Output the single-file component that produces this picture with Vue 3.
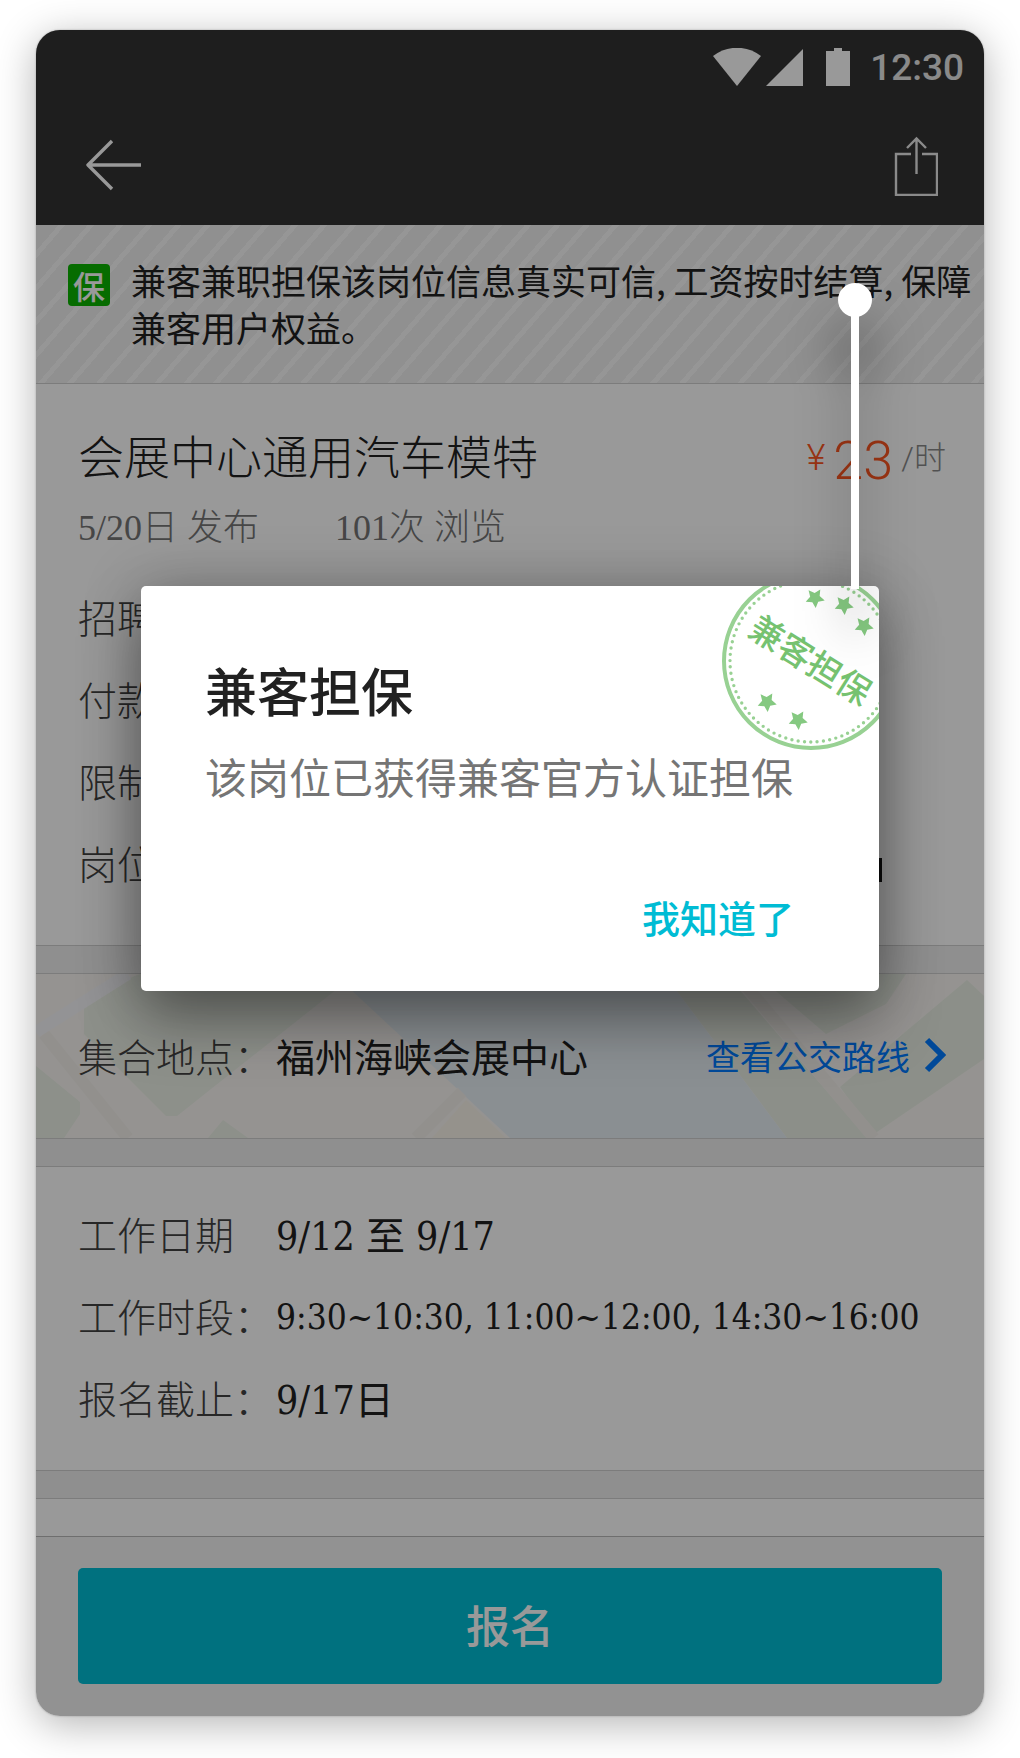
<script setup>
import { computed } from 'vue'

const jobLabels = ['招聘', '付款', '限制', '岗位']
const schedule = [
  { label: '工作日期', value: '9/12 至 9/17' },
  { label: '工作时段：', value: '9:30~10:30, 11:00~12:00, 14:30~16:00', long: true },
  { label: '报名截止：', value: '9/17日' },
]

// star centres in the stamp's 180 x 180 box
const stars = [[94, 27], [123, 34], [143, 55], [46, 131], [77, 149]]
const starPoints = computed(() => {
  const pts = []
  for (let i = 0; i < 10; i++) {
    const r = i % 2 ? 5 : 10
    const a = (Math.PI / 5) * i - Math.PI / 2
    pts.push(`${(r * Math.cos(a)).toFixed(2)},${(r * Math.sin(a)).toFixed(2)}`)
  }
  return pts.join(' ')
})
</script>

<template>
  <div class="page">
    <main class="phone">
      <header class="header">
        <div class="status">
          <svg class="wifi" width="48" height="38" viewBox="0 0 48 38"><path d="M0 8C14-3 34-3 48 8L24 38Z" fill="#fff" /></svg>
          <svg class="signal" width="38" height="38" viewBox="0 0 38 38"><path d="M37 1V38H0Z" fill="#fff" /></svg>
          <svg class="battery" width="24" height="38" viewBox="0 0 24 38"><path d="M0 3H8V0H16V3H24V38H0Z" fill="#fff" /></svg>
          <span class="time">12:30</span>
        </div>
        <nav class="toolbar">
          <button class="icon-btn" type="button" aria-label="返回">
            <svg width="56" height="52" viewBox="0 0 56 52" fill="none" stroke="#fff" stroke-width="3.4"><path d="M26 2 2 26 26 50M2 26H55" stroke-linejoin="round" /></svg>
          </button>
          <button class="icon-btn" type="button" aria-label="分享">
            <svg width="44" height="62" viewBox="0 0 44 62" fill="none" stroke="#e6e6e6" stroke-width="2.4"><path d="M17 20H2V61H43V20H28" /><path d="M22.500 40V5M13 14 22.500 4.500 32 14" /></svg>
          </button>
        </nav>
      </header>

      <section class="banner">
        <span class="badge">保</span>
        <p class="banner-text">兼客兼职担保该岗位信息真实可信, 工资按时结算, 保障兼客用户权益。</p>
      </section>

      <section class="card job">
        <div class="title-row">
          <h1 class="title">会展中心通用汽车模特</h1>
          <p class="price"><span class="yen">¥</span><span class="amount">23</span><span class="unit">/时</span></p>
        </div>
        <p class="meta"><span>5/20日 发布</span><span>101次 浏览</span></p>
        <ul class="rows">
          <li v-for="(label, i) in jobLabels" :key="label" class="row">
            <span class="label">{{ label }}</span>
            <span v-if="i === 3" class="cursor"></span>
          </li>
        </ul>
      </section>

      <section class="card place">
        <svg class="map" viewBox="0 0 948 164" preserveAspectRatio="none" aria-hidden="true">
          <rect width="948" height="164" fill="#f8f6f2" />
          <path d="M0 92 44 128V140L28 164H0ZM48 22 104 0H320L141 142H130L48 60ZM172 164 187 146 212 164Z" fill="#ebf0e6" />
          <path d="M628 0H690L831 164H751ZM720 0H870L850 30 790 60ZM804 113 931 6 948 22V85L838 160Z" fill="#eaefe4" />
          <path d="M298 0H628L751 164H474Z" fill="#e7eef4" />
          <path d="M396 164 430 126 470 164Z" fill="#f8f3ea" />
          <path d="M8 60 92 164M426 118 380 164M700 0 838 164" stroke="#f4f0ec" stroke-width="12" fill="none" />
          <path d="M0 58 92 0" stroke="#f6f5f8" stroke-width="12" fill="none" />
        </svg>
        <div class="row place-row">
          <span class="label">集合地点：</span>
          <span class="value">福州海峡会展中心</span>
          <a class="route" href="#">查看公交路线
            <svg width="22" height="36" viewBox="0 0 22 36" fill="none" stroke="#007aff" stroke-width="6"><path d="M3 3 18 18 3 33" /></svg>
          </a>
        </div>
      </section>

      <section class="card schedule">
        <dl class="rows">
          <div v-for="item in schedule" :key="item.label" class="row">
            <dt class="label">{{ item.label }}</dt>
            <dd class="value" :class="{ long: item.long }">{{ item.value }}</dd>
          </div>
        </dl>
      </section>

      <section class="card stub"></section>

      <footer class="footer">
        <button class="apply" type="button">报名</button>
      </footer>

      <div class="scrim">
        <div class="dialog" role="dialog" aria-labelledby="dialog-title">
          <div class="stamp-clip">
            <svg class="stamp" width="180" height="180" viewBox="0 0 180 180">
              <circle cx="90" cy="90" r="87" fill="none" stroke="#98d193" stroke-width="4" />
              <circle cx="90" cy="90" r="81" fill="none" stroke="#98d193" stroke-width="3.4" stroke-linecap="round" stroke-dasharray="0 6.362" />
              <polygon v-for="([x, y], i) in stars" :key="i" :points="starPoints" :transform="`translate(${x} ${y}) rotate(32)`" fill="#85c981" />
              <text class="stamp-text" x="89" y="102" text-anchor="middle" transform="rotate(32 90 90)">兼客担保</text>
            </svg>
          </div>
          <h2 id="dialog-title" class="dialog-title">兼客担保</h2>
          <p class="dialog-text">该岗位已获得兼客官方认证担保</p>
          <div class="dialog-actions"><button class="ok" type="button">我知道了</button></div>
          <svg class="pin" width="34" height="306" viewBox="0 0 34 306" aria-hidden="true"><path d="M13 17H21V306H13Z" fill="#fff" /><circle cx="17" cy="17" r="17" fill="#fff" /></svg>
        </div>
      </div>
    </main>
  </div>
</template>

<style>
body { margin: 0; background: #fff; }
</style>

<style scoped>
* { box-sizing: border-box; }
h1, h2, p, ul, dl, dd { margin: 0; padding: 0; font-weight: 400; }
ul { list-style: none; }
button { padding: 0; border: 0; background: none; font-family: inherit; }
svg { display: block; }
.page { padding: 30px 36px 42px; font-family: "Noto Sans CJK SC", sans-serif; color: #212121; }
.phone {
  position: relative;
  overflow: hidden;
  border-radius: 24px;
  background: #efefef;
  box-shadow: 0 8px 40px rgba(0, 0, 0, .3), 0 0 2px rgba(0, 0, 0, .3);
}

.header { background: #333; }
.status { display: flex; align-items: center; justify-content: flex-end; height: 74px; padding-right: 20px; }
.signal { margin-left: 5px; }
.battery { margin-left: 22px; }
.time { padding-top: 2px; margin-left: 20px; font: 500 37px/40px Roboto, sans-serif; color: #e6e6e6; }
.toolbar { display: flex; align-items: center; justify-content: space-between; height: 121px; padding: 1px 46px 0 50px; }

.banner {
  display: flex;
  align-items: flex-start;
  gap: 21px;
  padding: 31px 0 33px 32px;
  border-bottom: 1px solid #cfcfcf;
  background: repeating-linear-gradient(131deg, #f0f0f0 0 17px, #fafafa 17px 22px);
}
.badge { flex: none; width: 42px; margin-top: 8px; border-radius: 4px; background: #0ab400; color: #fff; font-size: 32px; font-weight: 500; line-height: 42px; text-align: center; }
.banner-text { flex: 1; font-size: 35px; line-height: 47px; }

.card { position: relative; background: #fff; border-bottom: 1px solid #cfcfcf; }
.card + .card { margin-top: 27px; border-top: 1px solid #cfcfcf; }
.job { padding: 35px 38px 42px 42px; }
.title-row { display: flex; justify-content: space-between; height: 70px; line-height: 70px; }
.title { font-size: 46px; font-weight: 300; line-height: 70px; }
.price { display: flex; align-items: center; padding-top: 8px; color: #ff5722; font-family: Roboto, "Noto Sans CJK SC", sans-serif; font-weight: 300; }
.yen { font-size: 36px; }
.amount { margin-left: 8px; padding-top: 6px; font-size: 54px; }
.unit { margin-left: 8px; color: #888; font-size: 32px; }
.meta { display: flex; gap: 76px; padding-top: 4px; font: 300 36px/70px "Liberation Serif", "Noto Sans CJK SC", serif; color: #757575; }
.job .rows { padding-top: 12px; }
.row { display: flex; align-items: center; height: 82px; }
.label { flex: none; width: 198px; font-size: 39px; font-weight: 300; color: #424242; white-space: nowrap; }
.value { font-family: "DejaVu Serif Condensed", "Noto Sans CJK SC", serif; font-size: 39px; white-space: nowrap; }
.value.long { padding-top: 4px; font-size: 35px; }
.cursor { width: 4px; height: 24px; margin: 16px 64px 0 auto; background: #111; }

.map { position: absolute; inset: 0; width: 100%; height: 100%; }
.place { padding: 40px 38px 42px 42px; }
.place-row { position: relative; }
.route { display: flex; align-items: center; gap: 14px; margin-left: auto; color: #007aff; font-size: 34px; text-decoration: none; white-space: nowrap; }
.schedule { padding: 25px 0 32px 42px; }
.card.stub { height: 38px; border-bottom: 0; }

.footer { padding: 31px 42px 32px; border-top: 1px solid #b8b8b8; background: #f4f4f4; }
.apply { display: block; width: 100%; height: 116px; padding-bottom: 4px; border-radius: 5px; background: #00bcd4; color: #fff; font-size: 44px; font-weight: 500; }

.scrim { position: absolute; inset: 0; padding: 556px 105px 0; background: rgba(0, 0, 0, .4); }
.dialog {
  position: relative;
  padding: 66px 85px 36px 64px;
  border-radius: 5px;
  background: #fff;
  box-shadow: 0 0 60px rgba(0, 0, 0, .22), 0 30px 60px rgba(0, 0, 0, .35);
}
.dialog-title { font-size: 52px; font-weight: 500; line-height: 76px; }
.dialog-text { margin-top: 18px; font-size: 42px; line-height: 60px; color: #757575; white-space: nowrap; }
.dialog-actions { display: flex; justify-content: flex-end; margin-top: 72px; }
.ok { height: 77px; color: #00bcd4; font-size: 38px; font-weight: 500; }
.stamp-clip { position: absolute; inset: 0; overflow: hidden; border-radius: 5px; }
.stamp { position: absolute; top: -15px; right: -22px; }
.stamp-text { fill: #76c270; font-size: 34px; font-weight: 500; }
.pin { position: absolute; right: 7px; top: -303px; overflow: visible; filter: drop-shadow(0 44px 24px rgba(0, 0, 0, .5)); }
</style>
